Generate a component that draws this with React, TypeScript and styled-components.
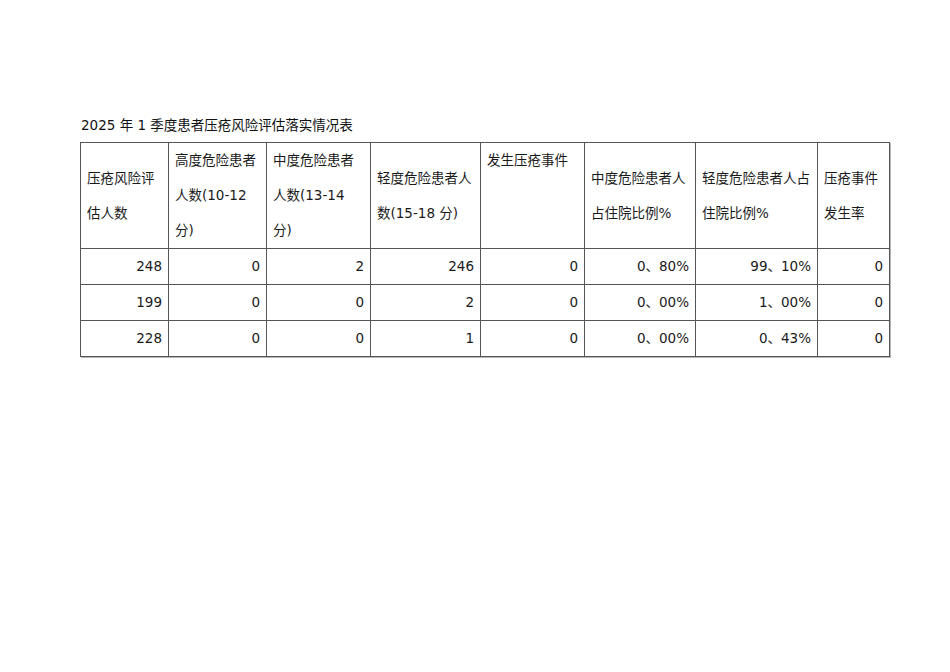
import React from "react";
import styled, { createGlobalStyle } from "styled-components";

const GlobalStyle = createGlobalStyle`
  html, body {
    margin: 0;
    padding: 0;
    background: #ffffff;
  }
  body {
    font-family: "DejaVu Sans", "Noto Sans CJK SC", sans-serif;
    color: #1a1a1a;
  }
`;

const Page = styled.div`
  width: 950px;
  height: 672px;
  box-sizing: border-box;
  padding: 114px 0 0 80px;
  background: #fff;
`;

const Title = styled.div`
  font-size: 13.5px;
  line-height: 22px;
  margin: 0 0 6px 1px;
  color: #111;
`;

const Table = styled.table`
  border-collapse: collapse;
  table-layout: fixed;
  width: 809px;
  font-size: 13.5px;
  box-shadow: 1px 1px 0 #b5b5b5;
`;

const HeadCell = styled.td<{ $align?: "top" | "middle" }>`
  border: 1px solid #555;
  padding: 0 4px 0 6px;
  line-height: 35px;
  vertical-align: ${(p) => p.$align ?? "middle"};
  text-align: left;
  color: #1a1a1a;
  white-space: nowrap;
`;

const Cell = styled.td`
  border: 1px solid #555;
  padding: 0 6px 0 4px;
  line-height: 35px;
  text-align: right;
  color: #1a1a1a;
  white-space: nowrap;
`;

const widths = [88, 98, 104, 110, 104, 111, 122, 72];

const headers: { lines: string[]; align?: "top" | "middle" }[] = [
  { lines: ["压疮风险评", "估人数"] },
  { lines: ["高度危险患者", "人数(10-12", "分)"], align: "top" },
  { lines: ["中度危险患者", "人数(13-14", "分)"], align: "top" },
  { lines: ["轻度危险患者人", "数(15-18 分)"] },
  { lines: ["发生压疮事件"], align: "top" },
  { lines: ["中度危险患者人", "占住院比例%"] },
  { lines: ["轻度危险患者人占", "住院比例%"] },
  { lines: ["压疮事件", "发生率"] },
];

const rows = [
  ["248", "0", "2", "246", "0", "0、80%", "99、10%", "0"],
  ["199", "0", "0", "2", "0", "0、00%", "1、00%", "0"],
  ["228", "0", "0", "1", "0", "0、00%", "0、43%", "0"],
];

export default function App() {
  return (
    <>
      <GlobalStyle />
      <Page>
        <Title>2025 年 1 季度患者压疮风险评估落实情况表</Title>
        <Table>
          <colgroup>
            {widths.map((w, i) => (
              <col key={i} style={{ width: w }} />
            ))}
          </colgroup>
          <tbody>
            <tr>
              {headers.map((h, i) => (
                <HeadCell key={i} $align={h.align}>
                  {h.lines.map((l, j) => (
                    <React.Fragment key={j}>
                      {j > 0 && <br />}
                      {l}
                    </React.Fragment>
                  ))}
                </HeadCell>
              ))}
            </tr>
            {rows.map((r, i) => (
              <tr key={i}>
                {r.map((v, j) => (
                  <Cell key={j}>{v}</Cell>
                ))}
              </tr>
            ))}
          </tbody>
        </Table>
      </Page>
    </>
  );
}
